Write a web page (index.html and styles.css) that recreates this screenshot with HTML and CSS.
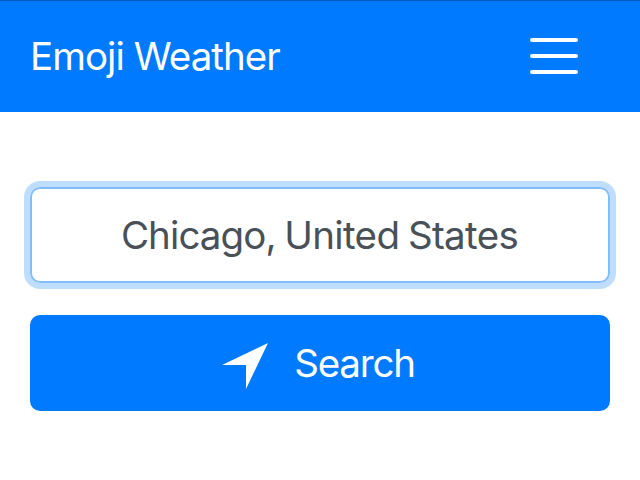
FILE: index.html
```
<!DOCTYPE html>
<html lang="en">
<head>
<meta charset="utf-8">
<title>Emoji Weather</title>
<link rel="stylesheet" href="styles.css">
</head>
<body>
<header class="navbar">
  <span class="brand">Emoji Weather</span>
  <button class="menu" aria-label="Menu"><span></span><span></span><span></span></button>
</header>
<main class="content">
  <div class="field"><span class="place"><span class="city">Chicago,</span> United States</span></div>
  <button class="search">
    <svg class="arrow" viewBox="0 0 46 46"><path d="M46 0 24 46V22H0Z"/></svg>
    <span class="label">Search</span>
  </button>
</main>
</body>
</html>
```
FILE: styles.css
```
* { box-sizing: border-box; }
body { margin: 0; height: 480px; overflow: hidden; background: #fff; font-family: Inter, sans-serif; font-size: 38.5px; font-weight: 380; line-height: 48px; }
button { font: inherit; border: 0; padding: 0; color: #fff; }
.navbar { height: 112px; background: #007aff; border-top: 1px solid #0059b8; color: #fff; display: flex; align-items: center; justify-content: space-between; padding: 0 62px 1px 30px; }
.brand { letter-spacing: -0.95px; }
.menu { background: none; width: 48px; display: flex; flex-direction: column; gap: 12px; }
.menu span { height: 4px; border-radius: 2px; background: #fff; }
.content { padding: 75px 30px 0; display: flex; flex-direction: column; gap: 32px; }
.field { height: 96px; border: 2px solid #80bdff; border-radius: 10px; box-shadow: 0 0 0 6px #bfdeff; color: #495057; display: flex; align-items: center; justify-content: center; padding: 0 1px 0 0; }
.place { letter-spacing: -0.65px; word-spacing: -1.6px; }
.city { letter-spacing: -0.9px; }
.search { height: 96px; border-radius: 10px; background: #007aff; display: flex; align-items: center; justify-content: center; gap: 26px; padding: 0 3px 0 0; }
.arrow { width: 46px; height: 46px; margin-top: 6px; fill: #fff; }
.label { letter-spacing: -1.2px; }
```
